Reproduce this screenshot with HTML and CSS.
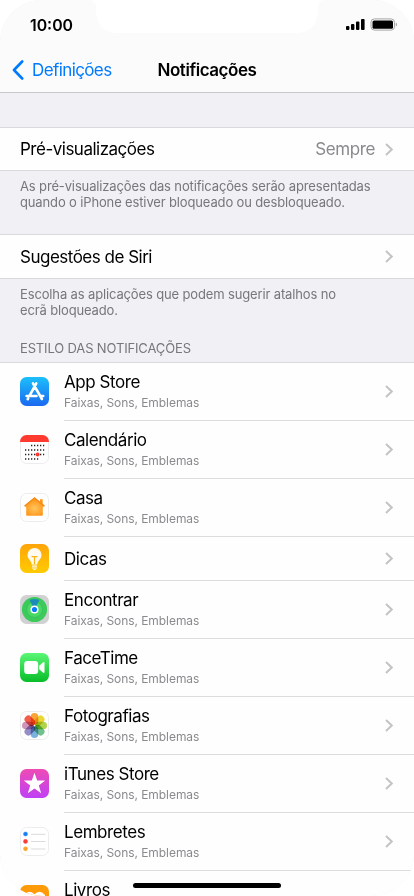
FILE: index.html
```html
<!DOCTYPE html>
<html lang="pt">
<head>
    <meta charset="UTF-8">
    <meta name="viewport" content="width=device-width, initial-scale=1.0">
    <title>Notificações</title>
    <link rel="stylesheet" href="styles.css">
</head>
<body>
    <div class="screen">
        <header>
            <svg class="notch" width="236" height="34" viewBox="0 0 236 34"><path d="M0 0C5 0 7 3 7 8C7 24 14 33 29 33H207C222 33 229 24 229 8C229 3 231 0 236 0Z" fill="#fff"/></svg>
            <div class="status-bar">
                <span class="time">10:00</span>
                <svg width="52" height="14" viewBox="0 0 52 14">
                    <rect x="0" y="8" width="3.4" height="4" rx="1"/>
                    <rect x="5" y="6" width="3.4" height="6" rx="1"/>
                    <rect x="10" y="3.5" width="3.4" height="8.5" rx="1"/>
                    <rect x="15" y="1" width="3.6" height="11" rx="1"/>
                    <rect x="25" y=".9" width="23.5" height="11.2" rx="3.4" fill="none" stroke="#a6a6a6"/>
                    <rect x="26.5" y="2.4" width="20.5" height="8.4" rx="1.6"/>
                    <path d="M49.8 4.6C51.5 5.2 51.5 8 49.8 8.5Z" fill="#a6a6a6"/>
                </svg>
            </div>
            <nav>
                <a class="back">
                    <svg width="12" height="20" viewBox="0 0 12 20"><path d="M10.2 1.5L2 10L10.2 18.5" fill="none" stroke="#007aff" stroke-width="2.6" stroke-linecap="round" stroke-linejoin="round"/></svg>
                    <span>Definições</span>
                </a>
                <h1>Notificações</h1>
            </nav>
        </header>

        <main>
            <div class="cell first">
                <span>Pré-visualizações</span>
                <span class="value">Sempre</span>
                <svg class="chevron" viewBox="0 0 8 13"><path d="M1 1L6.7 6.5L1 12"/></svg>
            </div>
            <p class="note">As pré-visualizações das notificações serão apresentadas<br>quando o iPhone estiver bloqueado ou desbloqueado.</p>

            <div class="cell">
                <span>Sugestões de Siri</span>
                <svg class="chevron" viewBox="0 0 8 13"><path d="M1 1L6.7 6.5L1 12"/></svg>
            </div>
            <p class="note short">Escolha as aplicações que podem sugerir atalhos no<br>ecrã bloqueado.</p>

            <h2>ESTILO DAS NOTIFICAÇÕES</h2>
            <ul class="apps">
                <li>
                    <svg class="icon" viewBox="0 0 29 29">
                        <defs><linearGradient id="store" x2="0" y2="1"><stop stop-color="#1bc0fb"/><stop offset="1" stop-color="#1b68f0"/></linearGradient></defs>
                        <rect width="29" height="29" rx="6.5" fill="url(#store)"/>
                        <g stroke="#fff" stroke-width="2.6" stroke-linecap="round"><path d="M16.3 6.3L9.6 18.6M13 6.3L21.9 22M6.6 19H16.5M20.5 19H23.2M8.2 21.4L7.7 22.2"/></g>
                    </svg>
                    <div class="info"><div class="text"><b>App Store</b><small>Faixas, Sons, Emblemas</small></div>
                    <svg class="chevron" viewBox="0 0 8 13"><path d="M1 1L6.7 6.5L1 12"/></svg></div>
                </li>
                <li>
                    <svg class="icon" viewBox="0 0 29 29">
                        <rect x=".5" y=".5" width="28" height="28" rx="6.2" fill="#fff" stroke="#ececec"/>
                        <path d="M0 7V6.5A6.5 6.5 0 0 1 6.5 0H22.5A6.5 6.5 0 0 1 29 6.5V7Z" fill="#ff3b30"/>
                        <g stroke="#222" stroke-width="1.3" stroke-dasharray="1.3 1.7"><path d="M11 10.5H24.2M5 15H24.2M5 19.5H24.2M5 24H18.2"/></g>
                        <circle cx="17.6" cy="19.5" r="2" fill="#ff3b30"/>
                    </svg>
                    <div class="info"><div class="text"><b>Calendário</b><small>Faixas, Sons, Emblemas</small></div>
                    <svg class="chevron" viewBox="0 0 8 13"><path d="M1 1L6.7 6.5L1 12"/></svg></div>
                </li>
                <li>
                    <svg class="icon" viewBox="0 0 29 29">
                        <defs><radialGradient id="home" cy=".6"><stop stop-color="#ffc65c"/><stop offset="1" stop-color="#ff9418"/></radialGradient></defs>
                        <rect x=".5" y=".5" width="28" height="28" rx="6.2" fill="#fff" stroke="#ececec"/>
                        <path d="M14.5 4.2L20 8.7V6.3H22.7V11L24.8 12.8L24 13.8H22.8V21.8Q22.8 22.8 21.8 22.8H7.2Q6.2 22.8 6.2 21.8V13.8H5L4.2 12.8Z" fill="url(#home)"/>
                        <path d="M4.8 13L14.5 5L24.2 13" fill="none" stroke="#f58a16" stroke-width="1.3"/>
                    </svg>
                    <div class="info"><div class="text"><b>Casa</b><small>Faixas, Sons, Emblemas</small></div>
                    <svg class="chevron" viewBox="0 0 8 13"><path d="M1 1L6.7 6.5L1 12"/></svg></div>
                </li>
                <li class="single">
                    <svg class="icon" viewBox="0 0 29 29">
                        <defs><linearGradient id="tips" x2="0" y2="1"><stop stop-color="#ffa50a"/><stop offset="1" stop-color="#ffcb00"/></linearGradient></defs>
                        <rect width="29" height="29" rx="6.5" fill="url(#tips)"/>
                        <path d="M14.5 4A7 7 0 0 0 7.5 11C7.5 15.4 11.4 16.4 11.8 20.4H17.2C17.6 16.4 21.5 15.4 21.5 11A7 7 0 0 0 14.5 4Z" fill="#fffaf0"/>
                        <path d="M11.5 12.7H17.5M14.5 12.7V20" stroke="#fbb31a" stroke-width="1.2"/>
                        <path d="M12 22.2H17M12 24H17M13.3 25.5H15.7" stroke="#fffaf0" stroke-width="1.2"/>
                    </svg>
                    <div class="info"><div class="text"><b>Dicas</b></div>
                    <svg class="chevron" viewBox="0 0 8 13"><path d="M1 1L6.7 6.5L1 12"/></svg></div>
                </li>
                <li>
                    <svg class="icon" viewBox="0 0 29 29">
                        <rect width="29" height="29" rx="6.5" fill="#d1d1d3"/>
                        <circle cx="14.5" cy="14.5" r="12.6" fill="#3ccb5b"/>
                        <circle cx="14.5" cy="14.5" r="8" fill="#49d866" stroke="#35bd58" stroke-width=".8"/>
                        <path d="M9.5 4.9Q14.5 3.3 19.5 4.9L15.8 12H13.2Z" fill="#1b8cb8"/>
                        <circle cx="14.5" cy="14.5" r="3.3" fill="#0a7aff" stroke="#fff" stroke-width="1.5"/>
                    </svg>
                    <div class="info"><div class="text"><b>Encontrar</b><small>Faixas, Sons, Emblemas</small></div>
                    <svg class="chevron" viewBox="0 0 8 13"><path d="M1 1L6.7 6.5L1 12"/></svg></div>
                </li>
                <li>
                    <svg class="icon" viewBox="0 0 29 29">
                        <defs><linearGradient id="facetime" x2="0" y2="1"><stop stop-color="#5bf675"/><stop offset="1" stop-color="#08bd29"/></linearGradient></defs>
                        <rect width="29" height="29" rx="6.5" fill="url(#facetime)"/>
                        <rect x="4.2" y="8" width="14" height="13" rx="3.2" fill="#fff"/>
                        <path d="M19.2 12.8L23.2 9.3Q24.5 8.6 24.5 10V19Q24.5 20.4 23.2 19.7L19.2 16.3Z" fill="#fff"/>
                    </svg>
                    <div class="info"><div class="text"><b>FaceTime</b><small>Faixas, Sons, Emblemas</small></div>
                    <svg class="chevron" viewBox="0 0 8 13"><path d="M1 1L6.7 6.5L1 12"/></svg></div>
                </li>
                <li>
                    <svg class="icon" viewBox="0 0 29 29">
                        <rect x=".5" y=".5" width="28" height="28" rx="6.2" fill="#fff" stroke="#ececec"/>
                        <g class="petals">
                            <rect x="10.7" y="2" width="7.6" height="11.8" rx="3.8" fill="#f99b1c"/>
                            <rect x="10.7" y="2" width="7.6" height="11.8" rx="3.8" fill="#e8d321" transform="rotate(45 14.5 14.5)"/>
                            <rect x="10.7" y="2" width="7.6" height="11.8" rx="3.8" fill="#a9cf38" transform="rotate(90 14.5 14.5)"/>
                            <rect x="10.7" y="2" width="7.6" height="11.8" rx="3.8" fill="#5fba84" transform="rotate(135 14.5 14.5)"/>
                            <rect x="10.7" y="2" width="7.6" height="11.8" rx="3.8" fill="#6da9da" transform="rotate(180 14.5 14.5)"/>
                            <rect x="10.7" y="2" width="7.6" height="11.8" rx="3.8" fill="#8b80c0" transform="rotate(225 14.5 14.5)"/>
                            <rect x="10.7" y="2" width="7.6" height="11.8" rx="3.8" fill="#c989b4" transform="rotate(270 14.5 14.5)"/>
                            <rect x="10.7" y="2" width="7.6" height="11.8" rx="3.8" fill="#f04b38" transform="rotate(315 14.5 14.5)"/>
                        </g>
                    </svg>
                    <div class="info"><div class="text"><b>Fotografias</b><small>Faixas, Sons, Emblemas</small></div>
                    <svg class="chevron" viewBox="0 0 8 13"><path d="M1 1L6.7 6.5L1 12"/></svg></div>
                </li>
                <li>
                    <svg class="icon" viewBox="0 0 29 29">
                        <defs><linearGradient id="itunes" x2="0" y2="1"><stop stop-color="#ee4bb4"/><stop offset="1" stop-color="#bf40f5"/></linearGradient></defs>
                        <rect width="29" height="29" rx="6.5" fill="url(#itunes)"/>
                        <path d="M14.5 3.7L17.2 11.5H25.2L18.8 16.4L21.2 24.3L14.5 19.5L7.8 24.3L10.2 16.4L3.8 11.5H11.8Z" fill="#fff"/>
                    </svg>
                    <div class="info"><div class="text"><b>iTunes Store</b><small>Faixas, Sons, Emblemas</small></div>
                    <svg class="chevron" viewBox="0 0 8 13"><path d="M1 1L6.7 6.5L1 12"/></svg></div>
                </li>
                <li>
                    <svg class="icon" viewBox="0 0 29 29">
                        <rect x=".5" y=".5" width="28" height="28" rx="6.2" fill="#fff" stroke="#ececec"/>
                        <g stroke="#d2d2d4" stroke-width=".8"><path d="M11 7.3H25.5M11 14.5H25.5M11 22H25.5"/></g>
                        <g stroke-opacity=".35" stroke-width="1"><circle cx="5.5" cy="7" r="2.1" fill="#157efb" stroke="#157efb"/><circle cx="5.5" cy="14.4" r="2.1" fill="#fc3d39" stroke="#fc3d39"/><circle cx="5.5" cy="21.8" r="2.1" fill="#fda429" stroke="#fda429"/></g>
                    </svg>
                    <div class="info"><div class="text"><b>Lembretes</b><small>Faixas, Sons, Emblemas</small></div>
                    <svg class="chevron" viewBox="0 0 8 13"><path d="M1 1L6.7 6.5L1 12"/></svg></div>
                </li>
                <li class="last">
                    <svg class="icon" viewBox="0 0 29 29">
                        <rect width="29" height="29" rx="6.5" fill="#ff9a08"/>
                        <path d="M4 10Q9.5 3.8 14.5 9.3Q19.5 3.8 25 10V23Q20 18 14.5 22Q9 18 4 23Z" fill="#fff"/>
                    </svg>
                    <div class="info"><div class="text"><b>Livros</b></div></div>
                </li>
            </ul>
        </main>
        <div class="home-bar"></div>
    </div>
</body>
</html>
```
FILE: styles.css
```css
* {
    box-sizing: border-box;
}
body {
    margin: 0;
    background: #fff;
    font-family: Inter, "Liberation Sans", sans-serif;
    color: #000;
}
.screen {
    position: relative;
    width: 414px;
    height: 896px;
    overflow: hidden;
    background: #f0f0f5;
    border-radius: 42px;
}
header {
    height: 93px;
    background: #fbfbfb;
    border-bottom: 1px solid #c8c8ca;
}
.notch {
    position: absolute;
    top: 0;
    left: 89px;
}
.status-bar {
    display: flex;
    justify-content: space-between;
    align-items: center;
    height: 50px;
    padding: 0 16px 0 30px;
}
.time {
    font-size: 15.8px;
    font-weight: 600;
}
nav {
    display: grid;
    grid-template-columns: 1fr auto 1fr;
    align-items: center;
    height: 40px;
    padding: 0 12px;
}
.back {
    display: flex;
    align-items: center;
    gap: 8px;
    color: #007aff;
    font-size: 17px;
    letter-spacing: -0.6px;
}
h1 {
    margin: 0;
    font-size: 17px;
    font-weight: 600;
    letter-spacing: -0.45px;
}

/* Plain setting rows */
.cell {
    display: flex;
    align-items: center;
    height: 45px;
    padding: 0 21px 0 20px;
    background: #fefefe;
    border-top: 1px solid #d9d9dd;
    border-bottom: 1px solid #d9d9dd;
    font-size: 17px;
    letter-spacing: -0.5px;
}
.first {
    height: 44px;
    margin-top: 34px;
}
.value {
    margin-left: auto;
    color: #8a8a8e;
    letter-spacing: -0.4px;
}
.chevron {
    flex: none;
    width: 8px;
    height: 13px;
    margin-left: auto;
    fill: none;
    stroke: #c4c4c7;
    stroke-width: 2;
}
.value + .chevron {
    margin-left: 10px;
}
.note {
    height: 63px;
    margin: 0;
    padding: 7px 20px 0;
    color: #77777b;
    font-size: 13px;
    line-height: 16px;
    letter-spacing: -0.14px;
}
.short {
    height: 61px;
}
h2 {
    margin: 0;
    height: 22px;
    padding-left: 20px;
    color: #77777b;
    font-size: 13px;
    font-weight: 400;
    line-height: 16px;
    letter-spacing: -0.15px;
}

/* App list */
.apps {
    margin: 0;
    padding: 0;
    list-style: none;
    background: #fefefe;
    border-top: 1px solid #d9d9dd;
}
.apps li {
    display: flex;
    align-items: center;
    height: 58px;
    padding-left: 20px;
}
.icon {
    flex: none;
    width: 29px;
    height: 29px;
    margin: 0 15px 2px 0;
}
.petals rect {
    mix-blend-mode: multiply;
    opacity: 0.9;
}
.info {
    display: flex;
    align-items: center;
    flex: 1;
    height: 100%;
    padding-right: 21px;
    border-bottom: 1px solid #dcdcdf;
}
.text {
    padding-top: 1px;
}
.text b {
    display: block;
    font-size: 17px;
    font-weight: 400;
    line-height: 20px;
    letter-spacing: -0.44px;
}
.text small {
    display: block;
    margin-top: 2px;
    color: #8a8a8e;
    font-size: 12px;
    line-height: 18px;
    letter-spacing: -0.06px;
}
.apps .single {
    height: 44px;
}
.single .text {
    padding-top: 0;
}
.last .info {
    align-items: flex-start;
    padding-top: 8px;
}
.home-bar {
    position: absolute;
    left: 133px;
    bottom: 8px;
    width: 148px;
    height: 5px;
    border-radius: 3px;
    background: #000;
}
```
